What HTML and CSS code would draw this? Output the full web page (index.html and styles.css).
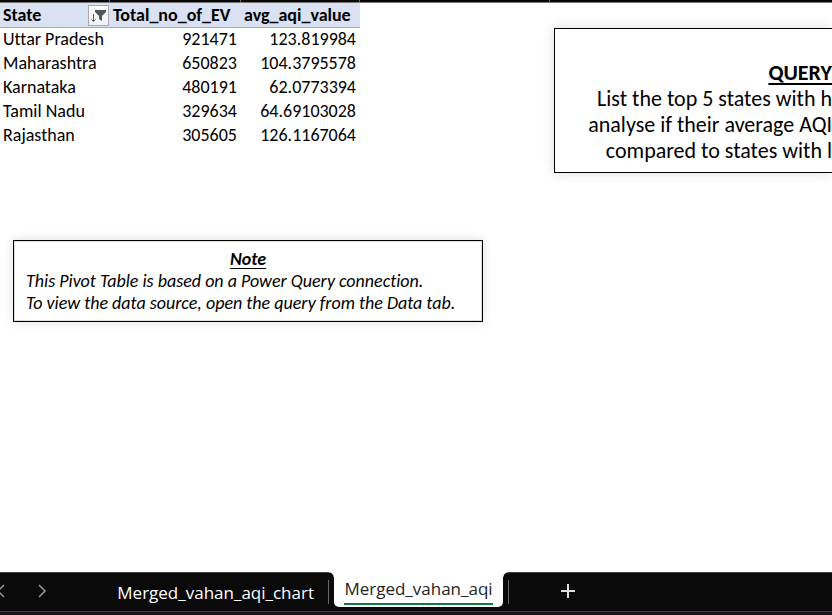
FILE: index.html
```html
<!DOCTYPE html>
<html lang="en">
<head>
<meta charset="utf-8">
<title>Merged_vahan_aqi</title>
<link rel="stylesheet" href="styles.css">
</head>
<body>
<div class="edge"><i></i><i></i><i></i><i></i></div>
<main class="sheet">
  <div class="left">
    <table class="pivot">
      <colgroup><col class="col-state"><col class="col-total"><col class="col-avg"></colgroup>
      <thead>
        <tr>
          <th scope="col"><div class="head">State
            <button class="filter" type="button" aria-label="Filter State"><svg width="19" height="19" viewBox="0 0 19 19"><path d="M6 4h11v2l-4 4v5l-3-2v-3L6 6z" fill="#55565a"/><path d="M4.500 8v7M2.500 13.500l2 2 2-2" fill="none" stroke="#55565a"/></svg></button></div></th>
          <th scope="col">Total_no_of_EV</th>
          <th scope="col">avg_aqi_value</th>
        </tr>
      </thead>
      <tbody>
        <tr><td>Uttar Pradesh</td><td>921471</td><td>123.819984</td></tr>
        <tr><td>Maharashtra</td><td>650823</td><td>104.3795578</td></tr>
        <tr><td>Karnataka</td><td>480191</td><td>62.0773394</td></tr>
        <tr><td>Tamil Nadu</td><td>329634</td><td>64.69103028</td></tr>
        <tr><td>Rajasthan</td><td>305605</td><td>126.1167064</td></tr>
      </tbody>
    </table>
    <section class="note">
      <h2>Note</h2>
      <p>This Pivot Table is based on a Power Query connection.</p>
      <p>To view the data source, open the query from the Data tab.</p>
    </section>
  </div>
  <section class="query">
    <h2>QUERY</h2>
    <p>List the top 5 states with h</p>
    <p>analyse if their average AQI</p>
    <p>compared to states with l</p>
  </section>
</main>
<nav class="tabs">
  <button class="arrow" type="button" aria-label="Previous sheet"><svg width="7" height="12" viewBox="0 0 7 12"><path d="M6 0L0 6l6 6"/></svg></button>
  <button class="arrow next" type="button" aria-label="Next sheet"><svg width="7" height="12" viewBox="0 0 7 12"><path d="M0 0l6 6-6 6"/></svg></button>
  <button class="tab chart" type="button">Merged_vahan_aqi_chart</button>
  <i class="divider"></i>
  <button class="tab active" type="button"><span>Merged_vahan_aqi</span></button>
  <i class="divider"></i>
  <button class="add" type="button" aria-label="New sheet"><svg width="14" height="14" viewBox="0 0 14 14"><path d="M7 0v14M0 7h14"/></svg></button>
</nav>
</body>
</html>
```
FILE: styles.css
```css
* { box-sizing: border-box; }
body {
  margin: 0;
  height: 100vh;
  display: flex;
  flex-direction: column;
  overflow: hidden;
  background: #fff;
  color: #000;
  font-family: Carlito, Lato, sans-serif;
  font-size: 18px;
  font-variant-ligatures: none;
}
h2, p { margin: 0; white-space: nowrap; }
button { padding: 0; border: 0; background: none; font: inherit; }
svg { display: block; }

.edge {
  flex: none;
  display: grid;
  grid-template-columns: 110px 131px 119px 190px;
  height: 3px;
  background: #080606;
  border-bottom: 1px solid #777;
}
.edge i { border-right: 1px solid #666; }

.sheet { flex: 1; display: flex; align-items: flex-start; min-height: 0; }
.left { flex: none; width: 554px; }

.pivot { width: 360px; table-layout: fixed; border-collapse: collapse; line-height: 23px; }
.col-state { width: 110px; }
.col-total { width: 131px; }
.col-avg { width: 119px; }
.pivot th, .pivot td { height: 24px; padding: 0 3px; text-align: right; white-space: nowrap; }
.pivot th { background: #d9e1f2; border-bottom: 1px solid #8ea9db; text-align: left; line-height: 22px; padding-top: 1px; }
.pivot td { padding-right: 4px; }
.pivot td:first-child { text-align: left; }
.pivot th:first-child { padding-right: 1px; }
.head { display: flex; justify-content: space-between; align-items: center; }
.filter {
  width: 21px;
  height: 21px;
  background: linear-gradient(#fff, #eff0f5);
  border: 1px solid #a6a9b0;
}

.note {
  width: 470px;
  height: 82px;
  margin: 93px 0 0 13px;
  padding: 7px 12px;
  border: 1px solid #000;
  outline: 1px solid #ddd;
  outline-offset: -2px;
  box-shadow: 0 0 10px #ddd;
  font-style: italic;
  line-height: 22px;
}
.note h2 { font-size: 18px; text-align: center; }

.query {
  flex: 1;
  min-width: 0;
  height: 145px;
  margin-top: 25px;
  padding-top: 31px;
  border: 1px solid #000;
  border-right: 0;
  box-shadow: 0 0 12px #ddd;
  font-size: 22px;
  line-height: 26px;
  text-align: right;
}
.query h2 { font-size: 22px; }
.note h2, .query h2 { text-decoration: underline; text-decoration-skip-ink: none; text-underline-offset: 3px; }
.query h2 { text-decoration-thickness: 2px; }

.tabs {
  flex: none;
  display: flex;
  align-items: flex-start;
  height: 43px;
  background: linear-gradient(#0a0a0b 39px, #4a4043 39px, #4a4043 40px, #171517 40px);
  box-shadow: inset 0 1px #444;
  color: #fff;
  font-family: "Open Sans", sans-serif;
  font-size: 17px;
}
.tabs svg { fill: none; stroke: #999; stroke-width: 1.5; overflow: visible; }
.arrow { width: 5px; height: 38px; display: flex; align-items: center; justify-content: flex-end; }
.next { margin-left: 33px; width: 8px; }
.tab { height: 40px; color: #fff; }
.chart { width: 268px; text-align: right; }
.divider { width: 1px; height: 24px; margin: 8px 5px 0 14px; background: #666; }
.active + .divider { margin: 8px 0 0 5px; }
.tab.active {
  position: relative;
  width: 169px;
  height: 35px;
  background: #fff;
  color: #242424;
  border-radius: 0 0 5px 5px;
}
.active::before, .active::after {
  content: "";
  position: absolute;
  top: 0;
  width: 5px;
  height: 5px;
}
.active::before { right: 100%; background: radial-gradient(circle at 0 100%, #0a0a0b 4px, #fff 5px); }
.active::after { left: 100%; background: radial-gradient(circle at 100% 100%, #0a0a0b 4px, #fff 5px); }
.active span { display: inline-block; border-bottom: 2px solid #107c41; line-height: 28px; font-weight: 500; }
.add { width: 66px; height: 38px; display: flex; align-items: center; justify-content: flex-end; }
.add svg { stroke: #ddd; stroke-width: 2; }
```
